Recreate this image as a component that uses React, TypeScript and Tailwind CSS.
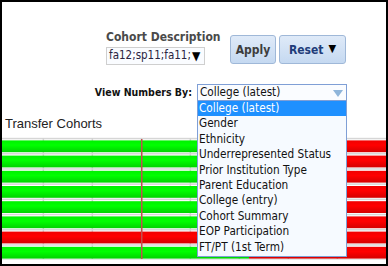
import React from "react";

const items = [
  "College (latest)",
  "Gender",
  "Ethnicity",
  "Underrepresented Status",
  "Prior Institution Type",
  "Parent Education",
  "College (entry)",
  "Cohort Summary",
  "EOP Participation",
  "FT/PT (1st Term)",
];

const tahoma = { fontFamily: 'Tahoma, "DejaVu Sans Condensed", "Liberation Sans", sans-serif' };

function Chart() {
  const rows = [0, 1, 2, 3, 4, 5, 6, 7];
  const vlines = [41.3, 90.3, 139.3, 188.3, 237.3, 286.3, 335.3];
  return (
    <svg width="384" height="123" viewBox="0 0 384 123" className="block">
      <defs>
        <linearGradient id="g" x1="0" y1="0" x2="0" y2="1">
          <stop offset="0" stopColor="#00f000" />
          <stop offset="0.4" stopColor="#00ff00" />
          <stop offset="1" stopColor="#00d200" />
        </linearGradient>
        <linearGradient id="r" x1="0" y1="0" x2="0" y2="1">
          <stop offset="0" stopColor="#f00000" />
          <stop offset="0.4" stopColor="#ff0000" />
          <stop offset="1" stopColor="#d40000" />
        </linearGradient>
      </defs>
      {rows.concat([8]).map((i) => (
        <rect key={"h" + i} x="0" y={0.8 + 15.2 * i} width="384" height="1.5" fill="#d6d6d6" />
      ))}
      {vlines.map((x) => (
        <rect key={"v" + x} x={x - 0.7} y="1" width="1.5" height="121" fill="#d2d2d2" />
      ))}
      {rows.map((i) => (
        <g key={"b" + i}>
          <rect x="0" y={3.4 + 15.2 * i} width="247" height="11.8" fill={i === 6 ? "url(#r)" : "url(#g)"} />
          <rect x="247" y={3.4 + 15.2 * i} width="137" height="11.8" fill="url(#r)" />
        </g>
      ))}
      <rect x="139" y="2" width="1.5" height="120" fill="#c0504d" />
    </svg>
  );
}

export default function App() {
  return (
    <div className="relative w-[388px] h-[266px] border-2 border-black bg-white overflow-hidden" style={tahoma}>
      <div className="flex pl-[104px] pt-[27px]">
        <div className="flex flex-col items-start w-[124px]">
          <div className="text-[12px] leading-[16px] font-bold text-[#4a4a4a] whitespace-nowrap">Cohort Description</div>
          <div className="mt-[2px] flex items-center w-[99px] h-[18px] border border-[#cfcfcf] bg-[#fafcff] pl-[2px] text-[11.5px] text-[#2a2440] overflow-hidden whitespace-nowrap">
            <span>fa12;sp11;fa11;</span>
            <span className="text-[12px] leading-none text-black ml-[1px]">▼</span>
          </div>
        </div>
        <div className="flex gap-[3px] mt-[6px]">
          <div className="w-[46px] h-[29px] rounded-[3px] border border-[#9fb8d8] bg-gradient-to-b from-[#dfeaf8] to-[#c5d9f1] flex items-center justify-center text-[12px] font-bold text-[#3d3d3d]">
            Apply
          </div>
          <div className="w-[67px] h-[29px] rounded-[3px] border border-[#9fb8d8] bg-gradient-to-b from-[#dfeaf8] to-[#c5d9f1] flex items-center justify-center gap-[5px] text-[12px] font-bold text-[#1f3d7a]">
            <span>Reset</span>
            <span className="text-[11px] text-black">▼</span>
          </div>
        </div>
      </div>
      <div className="flex items-center mt-[19px]">
        <div className="w-[190px] text-right text-[10.5px] font-bold text-[#111] whitespace-nowrap">View Numbers By:</div>
        <div className="ml-[5px] w-[150px] h-[18px] border border-[#7f9fd6] bg-[#fafcff] flex items-center justify-between pl-[2px] pr-[3px] text-[11.7px] text-[#111]">
          <span>College (latest)</span>
          <svg width="10" height="7" viewBox="0 0 10 7"><path d="M0 0 L10 0 L5 7 Z" fill="#8fb5da" /></svg>
        </div>
      </div>
      <div className="mt-[14px] pl-[3px] text-[13px] leading-[16px] text-[#222]" style={{ fontFamily: '"Liberation Sans", Arial, sans-serif' }}>
        Transfer Cohorts
      </div>
      <div className="mt-[5px]">
        <Chart />
      </div>
      <div className="absolute left-[195px] top-[98px] w-[150px] h-[157px] border border-[#7f9fd6] bg-[#f6faff] flex flex-col text-[11.7px] text-[#111]">
        {items.map((t, i) => (
          <div
            key={t}
            className={
              "h-[15.4px] leading-[15px] pl-[1px] whitespace-nowrap " +
              (i === 0 ? "bg-[#1e90ff] text-white" : "")
            }
          >
            {t}
          </div>
        ))}
      </div>
    </div>
  );
}
